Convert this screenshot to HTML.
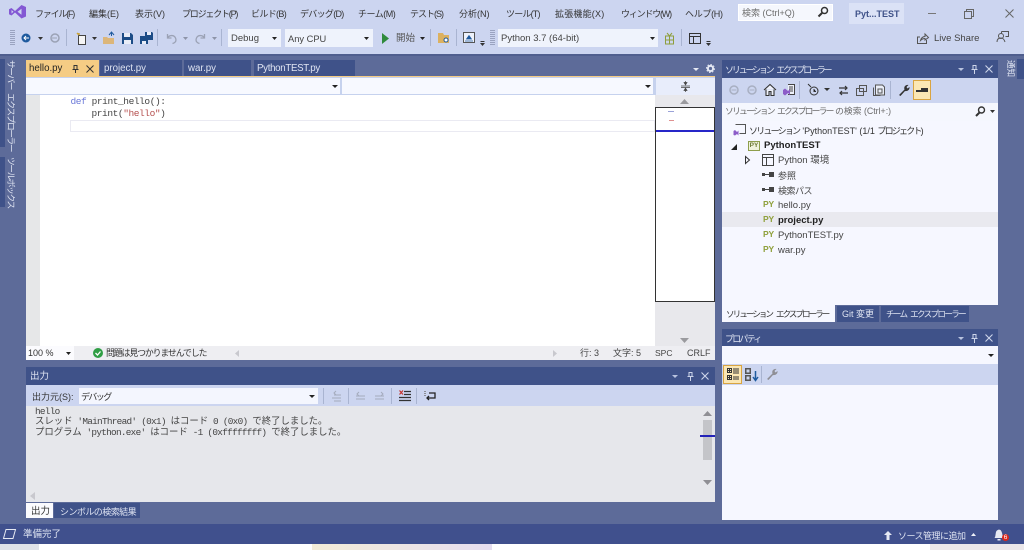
<!DOCTYPE html>
<html lang="ja"><head><meta charset="utf-8"><style>
html,body{margin:0;padding:0}
body{width:1024px;height:550px;overflow:hidden;position:relative;background:#5d6b99;font-family:"Liberation Sans","Noto Sans CJK JP",sans-serif;font-size:10px;color:#1e1e1e}
.b{position:absolute}
.t{position:absolute;white-space:nowrap;line-height:14px;height:14px;font-size:9.5px}
.m{color:#333;font-size:9px}
.w{color:#dfe4f2}
.k{letter-spacing:-1.8px;word-spacing:2.5px}
.v{position:absolute;white-space:nowrap;line-height:12px;font-size:8.7px;writing-mode:vertical-rl;text-orientation:sideways;color:#dfe4f2}
.mono{font-family:"Liberation Mono","Noto Sans CJK JP",monospace;color:#444}
.o{font-size:9.4px;letter-spacing:-.72px}
.o i{font-style:normal;letter-spacing:0}
.c{font-size:9.500px;letter-spacing:-.42px}
.py{color:#8fa03c;font-size:8.500px;font-weight:bold;letter-spacing:-.2px}
svg{position:absolute;overflow:visible}
</style></head><body>
<div class="b" style="left:0;top:0;width:1024px;height:54px;background:#ccd5f0"></div>
<svg style="left:9px;top:5px" width="17" height="14" viewBox="0 0 17 14"><path d="M12.500 0L17 2V11.500L12.500 13.500L6 7.500L2.500 10.500L0 9.200V4.300L2.500 3L6 6ZM12.500 3.800L8.500 6.800L12.500 9.800ZM2.500 5V8.500L4.500 6.800Z" fill="#8358d4" fill-rule="evenodd"/></svg>
<span class="t m" style="left:35px;top:7px;letter-spacing:-1.2px">ファイル(F)</span><span class="t m" style="left:89px;top:7px">編集(E)</span><span class="t m" style="left:135px;top:7px">表示(V)</span><span class="t m" style="left:182px;top:7px;letter-spacing:-1.2px">プロジェクト(P)</span><span class="t m" style="left:251px;top:7px;letter-spacing:-.65px">ビルド(B)</span><span class="t m" style="left:300px;top:7px;letter-spacing:-.7px">デバッグ(D)</span><span class="t m" style="left:358px;top:7px;letter-spacing:-.5px">チーム(M)</span><span class="t m" style="left:410px;top:7px;letter-spacing:-1px">テスト(S)</span><span class="t m" style="left:459px;top:7px">分析(N)</span><span class="t m" style="left:506px;top:7px;letter-spacing:-.8px">ツール(T)</span><span class="t m" style="left:555px;top:7px;letter-spacing:.2px">拡張機能(X)</span><span class="t m" style="left:621px;top:7px;letter-spacing:-1.2px">ウィンドウ(W)</span><span class="t m" style="left:685px;top:7px;letter-spacing:-.3px">ヘルプ(H)</span>
<div class="b" style="left:738px;top:4px;width:95px;height:17px;background:#f5f7fd;border:1px solid #fff;box-sizing:border-box"></div>
<span class="t" style="left:742px;top:6px;color:#6d6d6d;font-size:9px">検索 (Ctrl+Q)</span>
<svg style="left:817px;top:6px" width="12" height="12"><circle cx="7.500" cy="4.500" r="3" fill="none" stroke="#333" stroke-width="1.500"/><path d="M5 7L1.500 10.500" stroke="#333" stroke-width="2"/></svg>
<div class="b" style="left:849px;top:3px;width:55px;height:21px;background:#dbe2f6"></div>
<span class="t" style="left:855px;top:7px;color:#3f5289;font-size:9px;font-weight:bold">Pyt...TEST</span>
<div class="b" style="left:928px;top:13px;width:8px;height:1px;background:#777"></div>
<svg style="left:964px;top:9px" width="10" height="10"><path d="M.5 2.500h7v7h-7zM2.500 2.500v-2h7v7h-2" fill="none" stroke="#666"/></svg>
<svg style="left:1005px;top:9px" width="9" height="9"><path d="M.5.5l8 8M8.500.5l-8 8" stroke="#666"/></svg>
<div class="b" style="left:10px;top:30px;width:5px;height:15px;background:repeating-linear-gradient(0deg,#9aa3c0 0 1px,#ccd5f0 1px 2px)"></div>
<svg style="left:21px;top:33px" width="10" height="10"><circle cx="5" cy="5" r="4.500" fill="#1e5a9e"/><path d="M8 5H3M5 3L3 5l2 2" stroke="#fff" fill="none"/></svg>
<svg style="left:38px;top:37px" width="6" height="3"><path d="M0 0h5L2.500 3z" fill="#333"/></svg>
<svg style="left:50px;top:33px" width="10" height="10"><circle cx="5" cy="5" r="4" fill="none" stroke="#9ba2b5" stroke-width="1.500"/><path d="M2 5h5" stroke="#9ba2b5"/></svg>
<div class="b" style="left:66px;top:29px;width:1px;height:17px;background:#a9b4d1"></div>
<svg style="left:76px;top:32px" width="12" height="13"><path d="M2.500 3.500h7v9h-7z" fill="#f5f5f5" stroke="#444"/><path d="M3 3L1 1M3 1v2" stroke="#c9a33c" stroke-width="1.500"/></svg>
<svg style="left:92px;top:37px" width="6" height="3"><path d="M0 0h5L2.500 3z" fill="#333"/></svg>
<svg style="left:103px;top:32px" width="12" height="12"><path d="M0 5h4l1 1h6v6H0z" fill="#dcb67a"/><path d="M6 3l2.500-3L11 3M8.500 0v4" stroke="#1e5a9e" fill="none"/></svg>
<svg style="left:122px;top:33px" width="11" height="11"><path d="M0 0h9l2 2v9H0z" fill="#1c4c86"/><path d="M2 0h6v4H2zM2 7h7v4H2z" fill="#e9edf7"/></svg>
<svg style="left:140px;top:32px" width="13" height="12"><path d="M5 0h7l1 1v7H5z" fill="#1c4c86"/><path d="M7 0h4v3H7z" fill="#e9edf7"/><path d="M0 4h7l1 1v7H0z" fill="#1c4c86"/><path d="M2 9h4v3H2z" fill="#e9edf7"/></svg>
<div class="b" style="left:157px;top:29px;width:1px;height:17px;background:#a9b4d1"></div>
<svg style="left:166px;top:33px" width="11" height="11"><path d="M1.500 1v4h4M1.500 5C3 2 8 1.500 9.500 5s-1 5-3 5.500" fill="none" stroke="#9ba2b5" stroke-width="1.300"/></svg>
<svg style="left:183px;top:37px" width="6" height="3"><path d="M0 0h5L2.500 3z" fill="#8d94a8"/></svg>
<svg style="left:195px;top:33px" width="11" height="11"><path d="M9.500 1v4h-4M9.500 5C8 2 3 1.500 1.500 5s1 5 3 5.500" fill="none" stroke="#9ba2b5" stroke-width="1.300"/></svg>
<svg style="left:212px;top:37px" width="6" height="3"><path d="M0 0h5L2.500 3z" fill="#8d94a8"/></svg>
<div class="b" style="left:221px;top:29px;width:1px;height:17px;background:#a9b4d1"></div>
<div class="b" style="left:228px;top:29px;width:53px;height:18px;background:#eff3fc"></div>
<span class="t" style="left:231px;top:32px;color:#444;font-size:9.500px">Debug</span>
<svg style="left:272px;top:37px" width="6" height="3"><path d="M0 0h5L2.500 3z" fill="#222"/></svg>
<div class="b" style="left:285px;top:29px;width:88px;height:18px;background:#eff3fc"></div>
<span class="t" style="left:288px;top:32px;color:#444;font-size:9.300px">Any CPU</span>
<svg style="left:364px;top:37px" width="6" height="3"><path d="M0 0h5L2.500 3z" fill="#222"/></svg>
<svg style="left:382px;top:33px" width="8" height="11"><path d="M0 0l7 5.500L0 11z" fill="#2f8a3c"/></svg>
<span class="t" style="left:396px;top:32px;color:#555;font-size:9.500px">開始</span>
<svg style="left:420px;top:37px" width="6" height="3"><path d="M0 0h5L2.500 3z" fill="#222"/></svg>
<div class="b" style="left:430px;top:29px;width:1px;height:17px;background:#a9b4d1"></div>
<svg style="left:438px;top:33px" width="12" height="11"><path d="M0 0h5l1 2h5v8H0z" fill="#dcb160"/><circle cx="8" cy="7" r="2" fill="#fff" stroke="#1e5a9e"/></svg>
<div class="b" style="left:456px;top:29px;width:1px;height:17px;background:#a9b4d1"></div>
<svg style="left:463px;top:32px" width="12" height="12"><path d="M.5.5h11v10H.5z" fill="#eef2fb" stroke="#555"/><path d="M3.500 7L6 3.500 8.500 7zM2 9h8" fill="#1e5a9e" stroke="#1e5a9e" stroke-width=".7"/></svg>
<svg style="left:480px;top:41px" width="6" height="5"><path d="M.500.500h4" stroke="#333"/><path d="M0 2h5L2.500 5z" fill="#333"/></svg>
<div class="b" style="left:490px;top:30px;width:5px;height:15px;background:repeating-linear-gradient(0deg,#9aa3c0 0 1px,#ccd5f0 1px 2px)"></div>
<div class="b" style="left:498px;top:29px;width:160px;height:18px;background:#eff3fc"></div>
<span class="t" style="left:501px;top:32px;color:#444;font-size:9.500px">Python 3.7 (64-bit)</span>
<svg style="left:650px;top:37px" width="6" height="3"><path d="M0 0h5L2.500 3z" fill="#222"/></svg>
<svg style="left:665px;top:32px" width="10" height="12"><path d="M.5 4h8v8h-8zM.5 8h8M4.500 4v8M2 1l2.500 3L7 1" fill="none" stroke="#8e9e3c"/></svg>
<div class="b" style="left:681px;top:29px;width:1px;height:17px;background:#a9b4d1"></div>
<svg style="left:689px;top:33px" width="12" height="11"><path d="M.5.5h11v10H.5zM.5 3.500h11M4.500 3.500v7" fill="none" stroke="#333"/></svg>
<svg style="left:706px;top:41px" width="6" height="5"><path d="M.500.500h4" stroke="#333"/><path d="M0 2h5L2.500 5z" fill="#333"/></svg>
<svg style="left:917px;top:33px" width="12" height="11"><path d="M3 4H.5v6.500h9V7M3.500 7.500C4 5 6 3.500 8 3.500V1l3.500 3.500L8 7V5.500c-2 0-3.500 1-4.500 2z" fill="none" stroke="#555"/></svg>
<span class="t" style="left:934px;top:32px;color:#444;font-size:9.500px">Live Share</span>
<svg style="left:996px;top:30px" width="13" height="13"><path d="M5.500 1.500h7v5h-3M5.500 1.500v2" fill="none" stroke="#555"/><circle cx="5" cy="6" r="2.500" fill="#ccd5f0" stroke="#555"/><path d="M1 12c0-3 2-4 4-4s3 1 4 4" fill="none" stroke="#555"/></svg>
<div class="b" style="left:0;top:54px;width:1024px;height:2px;background:#4f5e8e"></div>

<div class="b" style="left:0;top:59px;width:5px;height:88px;background:#3f5289"></div>
<div class="b" style="left:0;top:157px;width:5px;height:50px;background:#3f5289"></div>
<span class="v" style="left:5px;top:60px;letter-spacing:-1.4px;word-spacing:3px">サーバー エクスプローラー</span>
<span class="v" style="left:5px;top:157px;letter-spacing:-1.4px">ツールボックス</span>
<div class="b" style="left:1017px;top:59px;width:7px;height:20px;background:#3f5289"></div>
<span class="v" style="left:1005px;top:60px;font-size:8.500px">通知</span>

<div class="b" style="left:26px;top:60px;width:73px;height:17px;background:#f5cc84"></div>
<span class="t" style="left:29px;top:62px;color:#222;font-size:9.700px">hello.py</span>
<svg style="left:72px;top:65px" width="7" height="8"><path d="M1.500.5h4M2 .5v4h3v-4M.500 4.500h6M3.500 4.500V8" fill="none" stroke="#333"/></svg>
<svg style="left:86px;top:65px" width="8" height="8"><path d="M.5.5l7 7M7.500.5l-7 7" stroke="#333"/></svg>
<div class="b" style="left:100px;top:60px;width:82px;height:17px;background:#3f5289"></div>
<span class="t w" style="left:104px;top:62px;font-size:9.700px">project.py</span>
<div class="b" style="left:184px;top:60px;width:67px;height:17px;background:#3f5289"></div>
<span class="t w" style="left:188px;top:62px;font-size:9.700px">war.py</span>
<div class="b" style="left:254px;top:60px;width:101px;height:17px;background:#3f5289"></div>
<span class="t w" style="left:257px;top:62px;font-size:9.700px;letter-spacing:-.3px">PythonTEST.py</span>
<svg style="left:693px;top:68px" width="6" height="3"><path d="M0 0h6L3 3z" fill="#e6e9f3"/></svg>
<svg style="left:706px;top:64px" width="9" height="9"><circle cx="4.500" cy="4.500" r="2.600" fill="none" stroke="#e6e9f3" stroke-width="2"/><circle cx="4.500" cy="4.500" r="4" fill="none" stroke="#e6e9f3" stroke-dasharray="1.500 1.600"/></svg>

<div class="b" style="left:26px;top:76px;width:689px;height:1px;background:#f5cc84"></div>
<div class="b" style="left:26px;top:77px;width:689px;height:19px;background:#c6d2ee"></div>
<div class="b" style="left:26px;top:78px;width:314px;height:16px;background:#f7f9ff"></div>
<div class="b" style="left:342px;top:78px;width:311px;height:16px;background:#f7f9ff"></div>
<div class="b" style="left:656px;top:78px;width:59px;height:17px;background:#e8edfb"></div>
<svg style="left:332px;top:85px" width="6" height="3"><path d="M0 0h6L3 3z" fill="#222"/></svg>
<svg style="left:645px;top:85px" width="6" height="3"><path d="M0 0h6L3 3z" fill="#222"/></svg>
<svg style="left:681px;top:81px" width="9" height="11"><path d="M4.500 0v3M3 1.500L4.500 4 6 1.500zM0 5h9M0 6.500h9M4.500 11V8M3 9.500L4.500 7 6 9.500z" fill="#444" stroke="#444" stroke-width=".7"/></svg>

<div class="b" style="left:26px;top:95px;width:689px;height:251px;background:#fff"></div>
<div class="b" style="left:26px;top:95px;width:14px;height:251px;background:#e6e7e8"></div>
<div class="b" style="left:70px;top:120px;width:585px;height:12px;border:1px solid #eaeaf2;box-sizing:border-box"></div>
<span class="t mono c" style="left:70.500px;top:95px"><span style="color:#6a78d8">def</span> print_hello():</span>
<span class="t mono c" style="left:91.500px;top:107px">print(<span style="color:#b5504f">"hello"</span>)</span>
<div class="b" style="left:655px;top:95px;width:60px;height:251px;background:#e8e8ec"></div>
<svg style="left:680px;top:99px" width="9" height="5"><path d="M0 5l4.500-5L9 5z" fill="#9a9a9e"/></svg>
<div class="b" style="left:655px;top:107px;width:60px;height:195px;background:#fff;border:1px solid #333;box-sizing:border-box"></div>
<div class="b" style="left:656px;top:130px;width:58px;height:2px;background:#2626c8"></div>
<div class="b" style="left:668px;top:111px;width:6px;height:1px;background:#9aa2d8"></div>
<div class="b" style="left:669px;top:120px;width:5px;height:1px;background:#df9090"></div>
<svg style="left:680px;top:338px" width="9" height="5"><path d="M0 0l4.500 5L9 0z" fill="#9a9a9e"/></svg>

<div class="b" style="left:26px;top:346px;width:689px;height:14px;background:#eeeef2"></div>
<div class="b" style="left:26px;top:346px;width:48px;height:14px;background:#fbfbfe"></div>
<span class="t" style="left:28px;top:347px;height:13px;line-height:13px;color:#333;font-size:9px">100 %</span>
<svg style="left:66px;top:352px" width="5" height="3"><path d="M0 0h5L2.500 3z" fill="#222"/></svg>
<svg style="left:93px;top:348px" width="10" height="10"><circle cx="5" cy="5" r="5" fill="#2f9e44"/><path d="M2.500 5l2 2 3-3.500" stroke="#fff" stroke-width="1.300" fill="none"/></svg>
<span class="t" style="left:106px;top:347px;height:13px;line-height:13px;color:#333;font-size:8.900px;letter-spacing:-1.1px">問題は見つかりませんでした</span>
<svg style="left:235px;top:350px" width="4" height="7"><path d="M4 0v7L0 3.500z" fill="#c8c8ce"/></svg>
<svg style="left:553px;top:350px" width="4" height="7"><path d="M0 0v7l4-3.500z" fill="#c8c8ce"/></svg>
<span class="t" style="left:580px;top:347px;height:13px;line-height:13px;color:#444;font-size:9px">行: 3</span>
<span class="t" style="left:613px;top:347px;height:13px;line-height:13px;color:#444;font-size:9px">文字: 5</span>
<span class="t" style="left:655px;top:347px;height:13px;line-height:13px;color:#444;font-size:8.500px">SPC</span>
<span class="t" style="left:687px;top:347px;height:13px;line-height:13px;color:#444;font-size:9px">CRLF</span>

<div class="b" style="left:26px;top:367px;width:689px;height:18px;background:#3f5289"></div>
<span class="t w" style="left:30px;top:370px;font-size:9.500px">出力</span>
<svg style="left:672px;top:375px" width="6" height="3"><path d="M0 0h6L3 3z" fill="#b9c3df"/></svg>
<svg style="left:687px;top:372px" width="7" height="9"><path d="M1.500.5h4M2 .5v4h3v-4M.500 4.500h6M3.500 4.500V9" fill="none" stroke="#cdd5ea"/></svg>
<svg style="left:701px;top:372px" width="8" height="8"><path d="M.5.5l7 7M7.500.5l-7 7" stroke="#cdd5ea" stroke-width="1.100"/></svg>
<div class="b" style="left:26px;top:385px;width:689px;height:21px;background:#ccd5f0"></div>
<span class="t" style="left:32px;top:390px;color:#333;font-size:9px">出力元(S):</span>
<div class="b" style="left:79px;top:388px;width:239px;height:16px;background:#f4f6fe"></div>
<span class="t" style="left:81px;top:390px;color:#333;font-size:9px;letter-spacing:-1.6px">デバッグ</span>
<svg style="left:309px;top:395px" width="6" height="3"><path d="M0 0h6L3 3z" fill="#222"/></svg>
<div class="b" style="left:323px;top:388px;width:1px;height:16px;background:#a9b4d1"></div>
<div class="b" style="left:348px;top:388px;width:1px;height:16px;background:#a9b4d1"></div>
<div class="b" style="left:391px;top:388px;width:1px;height:16px;background:#a9b4d1"></div>
<div class="b" style="left:416px;top:388px;width:1px;height:16px;background:#a9b4d1"></div>
<svg style="left:332px;top:390px" width="11" height="12"><path d="M2 5h7M0 8h9M2 11h7M4 1L2 3l2 2" fill="none" stroke="#a4abbd"/></svg>
<svg style="left:356px;top:391px" width="10" height="10"><path d="M0 5h9M0 8h9M3 1L1 3l2 2" fill="none" stroke="#a4abbd"/></svg>
<svg style="left:375px;top:391px" width="10" height="10"><path d="M0 5h9M0 8h9M6 1l2 2-2 2" fill="none" stroke="#a4abbd"/></svg>
<svg style="left:399px;top:390px" width="12" height="12"><path d="M5 1.500h7M5 4.500h7M0 7.500h12M0 10.500h12" stroke="#333" stroke-width="1.200"/><path d="M.5.500l3.500 4M4 .5L.5 4.500" stroke="#c5352f" stroke-width="1.200"/></svg>
<svg style="left:424px;top:390px" width="12" height="12"><path d="M5 3h6v5H3M5 6L3 8l2 2" fill="none" stroke="#222" stroke-width="1.300"/><path d="M1 1v6" stroke="#777" stroke-dasharray="1 1" stroke-width="1.500"/></svg>
<div class="b" style="left:26px;top:406px;width:689px;height:96px;background:#e6e7eb"></div>
<span class="t mono o" style="left:35px;top:405px">hello</span>
<span class="t mono o" style="left:35px;top:415px"><i>スレッド</i> 'MainThread' (0x1) <i>はコード</i> 0 (0x0) <i>で終了しました。</i></span>
<span class="t mono o" style="left:35px;top:426px"><i>プログラム</i> 'python.exe' <i>はコード</i> -1 (0xffffffff) <i>で終了しました。</i></span>
<svg style="left:703px;top:411px" width="9" height="5"><path d="M0 5l4.500-5L9 5z" fill="#8f8f94"/></svg>
<div class="b" style="left:703px;top:420px;width:9px;height:40px;background:#c4c5c9"></div>
<div class="b" style="left:700px;top:435px;width:15px;height:2px;background:#2222b8"></div>
<svg style="left:703px;top:480px" width="9" height="5"><path d="M0 0l4.500 5L9 0z" fill="#8f8f94"/></svg>
<svg style="left:30px;top:492px" width="5" height="8"><path d="M5 0v8L0 4z" fill="#c8c8ce"/></svg>
<div class="b" style="left:26px;top:503px;width:27px;height:15px;background:#fbfbfe"></div>
<span class="t" style="left:31px;top:505px;color:#333;font-size:9.500px">出力</span>
<div class="b" style="left:54px;top:503px;width:86px;height:15px;background:#3f5289"></div>
<span class="t w" style="left:60px;top:505px;font-size:9px;letter-spacing:-.55px">シンボルの検索結果</span>

<div class="b" style="left:722px;top:60px;width:276px;height:18px;background:#3f5289"></div>
<span class="t w" style="left:725px;top:63px;font-size:9px;letter-spacing:-2.2px;word-spacing:3.5px">ソリューション エクスプローラー</span>
<svg style="left:958px;top:68px" width="6" height="3"><path d="M0 0h6L3 3z" fill="#b9c3df"/></svg>
<svg style="left:971px;top:65px" width="7" height="9"><path d="M1.500.5h4M2 .5v4h3v-4M.500 4.500h6M3.500 4.500V9" fill="none" stroke="#cdd5ea"/></svg>
<svg style="left:985px;top:65px" width="8" height="8"><path d="M.5.5l7 7M7.500.5l-7 7" stroke="#cdd5ea" stroke-width="1.100"/></svg>
<div class="b" style="left:722px;top:78px;width:276px;height:25px;background:#ccd5f0"></div>
<svg style="left:729px;top:85px" width="10" height="10"><circle cx="5" cy="5" r="4" fill="none" stroke="#a8afc2" stroke-width="1.500"/><path d="M7.500 5h-5" stroke="#a8afc2"/></svg>
<svg style="left:747px;top:85px" width="10" height="10"><circle cx="5" cy="5" r="4" fill="none" stroke="#a8afc2" stroke-width="1.500"/><path d="M2.500 5h5" stroke="#a8afc2"/></svg>
<svg style="left:764px;top:84px" width="12" height="12"><path d="M0 6l6-5.500L12 6M2 5.500v6h3v-4h2v4h3v-6" fill="#eef1fa" stroke="#333" stroke-width="1.100"/></svg>
<svg style="left:782px;top:84px" width="13" height="12"><path d="M6 .5h6.500v10H6" fill="#eef1fa" stroke="#444"/><path d="M7 3h4M7 5h4M7 7h4" stroke="#444"/><path d="M1 6l2-1.500L6 7l2-2v6L6 9l-3 2.500L1 10z" fill="#8c5cc8"/></svg>
<div class="b" style="left:799px;top:81px;width:1px;height:18px;background:#a9b4d1"></div>
<svg style="left:808px;top:84px" width="11" height="12"><circle cx="6" cy="7" r="4" fill="none" stroke="#333"/><path d="M6 5v2.500h2M0 0l3 3" stroke="#333"/></svg>
<svg style="left:824px;top:88px" width="6" height="3"><path d="M0 0h6L3 3z" fill="#333"/></svg>
<svg style="left:838px;top:85px" width="11" height="11"><path d="M1 3h8M7 1l2 2-2 2M10 8H2M4 6L2 8l2 2" fill="none" stroke="#333" stroke-width="1.200"/></svg>
<svg style="left:856px;top:85px" width="11" height="11"><path d="M3.500.5h7v6h-7zM.5 3.500h7v7h-7z" fill="#ccd5f0" stroke="#555"/></svg>
<svg style="left:873px;top:84px" width="12" height="12"><path d="M2.500 1h7l2 2v8h-9z" fill="#e9edf7" stroke="#555"/><path d="M.5 3.500v8h7" fill="none" stroke="#555"/><rect x="5" y="5" width="4" height="4" fill="none" stroke="#555"/></svg>
<div class="b" style="left:890px;top:81px;width:1px;height:18px;background:#a9b4d1"></div>
<svg style="left:898px;top:84px" width="12" height="12"><path d="M1 11l5.500-5.500C5.500 3 7.500.5 10.500 1L8.500 3l1 1.500L11.500 3c.5 3-2.500 4.500-4.500 4L2.500 12z" fill="#333"/></svg>
<div class="b" style="left:913px;top:80px;width:18px;height:20px;background:#fbe7b4;border:1px solid #d9a441;box-sizing:border-box"></div>
<div class="b" style="left:916px;top:90px;width:12px;height:2px;background:#333"></div><div class="b" style="left:921px;top:88px;width:7px;height:3px;background:#333"></div>
<div class="b" style="left:722px;top:103px;width:276px;height:18px;background:#f5f7fe"></div>
<span class="t" style="left:725px;top:104px;color:#6b6b6b;font-size:8.800px"><span class="k">ソリューション エクスプローラー</span> の検索 (Ctrl+:)</span>
<svg style="left:975px;top:106px" width="11" height="11"><circle cx="6.500" cy="4" r="3" fill="none" stroke="#333" stroke-width="1.400"/><path d="M4.500 6.500L1 10" stroke="#333" stroke-width="2"/></svg>
<svg style="left:990px;top:110px" width="5" height="3"><path d="M0 0h5L2.500 3z" fill="#333"/></svg>
<div class="b" style="left:722px;top:121px;width:276px;height:184px;background:#f6f7ff"></div>
<div class="b" style="left:722px;top:212px;width:276px;height:15px;background:#e9e9ef"></div>
<svg style="left:733px;top:124px" width="13" height="12"><path d="M2.500.5h10v9h-6" fill="#f6f7ff" stroke="#555"/><path d="M.5 7l1.500-1 2 2 1.500-1.500v5L4 10l-2 1.500L.5 11z" fill="#8c5cc8"/></svg>
<span class="t" style="left:749px;top:124px;color:#333;font-size:9px"><span class="k">ソリューション </span>'PythonTEST' (1/1 <span class="k">プロジェクト</span>)</span>
<svg style="left:731px;top:144px" width="6" height="6"><path d="M6 0v6H0z" fill="#222"/></svg>
<div class="b" style="left:748px;top:141px;width:12px;height:10px;background:#f0f3dc;border:1px solid #8e9e4c;box-sizing:border-box;color:#6d7a35;font-size:6.500px;line-height:8px;text-align:center;font-weight:bold">PY</div>
<span class="t" style="left:764px;top:139px;color:#222;font-size:9.500px;font-weight:bold">PythonTEST</span>
<svg style="left:745px;top:156px" width="5" height="8"><path d="M.5.500l4 3.500-4 3.500z" fill="#f6f7ff" stroke="#333"/></svg>
<svg style="left:762px;top:154px" width="12" height="12"><path d="M.5.5h11v11H.5zM.5 3.500h11M4.500 3.500v8" fill="none" stroke="#444"/></svg>
<span class="t" style="left:778px;top:154px;color:#444;font-size:9.500px">Python 環境</span>
<svg style="left:762px;top:172px" width="12" height="6"><path d="M0 1h3v3H0zM7 0h5v5H7z" fill="#444"/><path d="M3 2.500h4" stroke="#444"/></svg>
<span class="t" style="left:778px;top:169px;color:#444;font-size:9px">参照</span>
<svg style="left:762px;top:187px" width="12" height="6"><path d="M0 1h3v3H0zM7 0h5v5H7z" fill="#444"/><path d="M3 2.500h4" stroke="#444"/></svg>
<span class="t" style="left:778px;top:184px;color:#444;font-size:9px;letter-spacing:-.5px">検索パス</span>
<span class="t py" style="left:763px;top:197px">PY</span><span class="t" style="left:778px;top:199px;color:#444;font-size:9.500px">hello.py</span>
<span class="t py" style="left:763px;top:212px">PY</span><span class="t" style="left:778px;top:214px;color:#222;font-size:9.500px;font-weight:bold">project.py</span>
<span class="t py" style="left:763px;top:227px">PY</span><span class="t" style="left:778px;top:229px;color:#444;font-size:9.500px">PythonTEST.py</span>
<span class="t py" style="left:763px;top:242px">PY</span><span class="t" style="left:778px;top:244px;color:#444;font-size:9.500px">war.py</span>
<div class="b" style="left:722px;top:305px;width:113px;height:17px;background:#f6f7ff"></div>
<span class="t" style="left:726px;top:307px;color:#333;font-size:8.600px;letter-spacing:-2px;word-spacing:3.500px">ソリューション エクスプローラー</span>
<div class="b" style="left:837px;top:306px;width:42px;height:16px;background:#3f5289"></div>
<span class="t w" style="left:842px;top:307px;font-size:9px">Git 変更</span>
<div class="b" style="left:881px;top:306px;width:88px;height:16px;background:#3f5289"></div>
<span class="t w" style="left:886px;top:307px;font-size:8.600px;letter-spacing:-1.700px;word-spacing:3px">チーム エクスプローラー</span>

<div class="b" style="left:722px;top:329px;width:276px;height:17px;background:#3f5289"></div>
<span class="t w" style="left:725px;top:332px;font-size:9px;letter-spacing:-1.8px">プロパティ</span>
<svg style="left:958px;top:337px" width="6" height="3"><path d="M0 0h6L3 3z" fill="#b9c3df"/></svg>
<svg style="left:971px;top:334px" width="7" height="9"><path d="M1.500.5h4M2 .5v4h3v-4M.500 4.500h6M3.500 4.500V9" fill="none" stroke="#cdd5ea"/></svg>
<svg style="left:985px;top:334px" width="8" height="8"><path d="M.5.5l7 7M7.500.5l-7 7" stroke="#cdd5ea" stroke-width="1.100"/></svg>
<div class="b" style="left:722px;top:346px;width:276px;height:174px;background:#f6f7ff"></div>
<svg style="left:988px;top:354px" width="6" height="3"><path d="M0 0h6L3 3z" fill="#222"/></svg>
<div class="b" style="left:722px;top:364px;width:276px;height:21px;background:#ccd5f0"></div>
<div class="b" style="left:723px;top:365px;width:19px;height:19px;background:#fbe7b4;border:1px solid #d9a441;box-sizing:border-box"></div>
<svg style="left:727px;top:368px" width="12" height="13"><path d="M.5.5h4v4h-4zM.5 7.500h4v4h-4zM1 2.500h3M2.500 1v3M1 9.500h3M2.500 8v3" fill="none" stroke="#333"/><path d="M6 1h6M6 3h6M6 5h6M6 9h6M6 11h6" stroke="#333"/></svg>
<svg style="left:745px;top:368px" width="14" height="13"><path d="M0 0h6v6H0zM0 7h6v6H0z" fill="#555"/><path d="M1.500 1.500h3v3h-3zM1.500 8.500h3v3h-3z" fill="#ccd5f0"/><path d="M10.500 3v9M8 9l2.500 3.500L13 9" fill="none" stroke="#1e5a9e" stroke-width="1.500"/></svg>
<div class="b" style="left:761px;top:366px;width:1px;height:17px;background:#a9b4d1"></div>
<svg style="left:766px;top:368px" width="12" height="12"><path d="M1 11l5.500-5.500C5.500 3 7.500.5 10.500 1L8.500 3l1 1.500L11.500 3c.5 3-2.500 4.500-4.500 4L2.500 12z" fill="#8f8f96"/></svg>

<div class="b" style="left:0;top:524px;width:1024px;height:20px;background:#40508d"></div>
<svg style="left:3px;top:529px" width="13" height="10"><path d="M3 .5h9.500L10 9.500H.5z" fill="none" stroke="#e6e9f3"/></svg>
<span class="t w" style="left:23px;top:528px;font-size:9.500px">準備完了</span>
<svg style="left:884px;top:531px" width="8" height="9"><path d="M4 0l4 4H5.500v5h-3V4H0z" fill="#e6e9f3"/></svg>
<span class="t w" style="left:898px;top:529px;font-size:9px;letter-spacing:-.5px">ソース管理に追加</span>
<svg style="left:971px;top:533px" width="5" height="3"><path d="M0 3l2.500-3L5 3z" fill="#f0f2f8"/></svg>
<svg style="left:994px;top:528px" width="10" height="13"><path d="M.5 10c1-1 1-4 1.500-6S6 0 7.500 3.500 8 8 9.500 10zM3.500 11h3v1.500h-3z" fill="#e6e9f3"/></svg>
<div class="b" style="left:1002px;top:534px;width:7px;height:7px;border-radius:50%;background:#d9261c;color:#fff;font-size:6.500px;line-height:7px;text-align:center">6</div>
<div class="b" style="left:0;top:544px;width:1024px;height:6px;background:#fff"></div>
<div class="b" style="left:0;top:544px;width:39px;height:6px;background:#dfe2e8"></div>
<div class="b" style="left:312px;top:544px;width:180px;height:6px;background:linear-gradient(90deg,#f3ecd8,#e6def0)"></div>
<div class="b" style="left:930px;top:544px;width:94px;height:6px;background:#ebe7ea"></div>
</body></html>
